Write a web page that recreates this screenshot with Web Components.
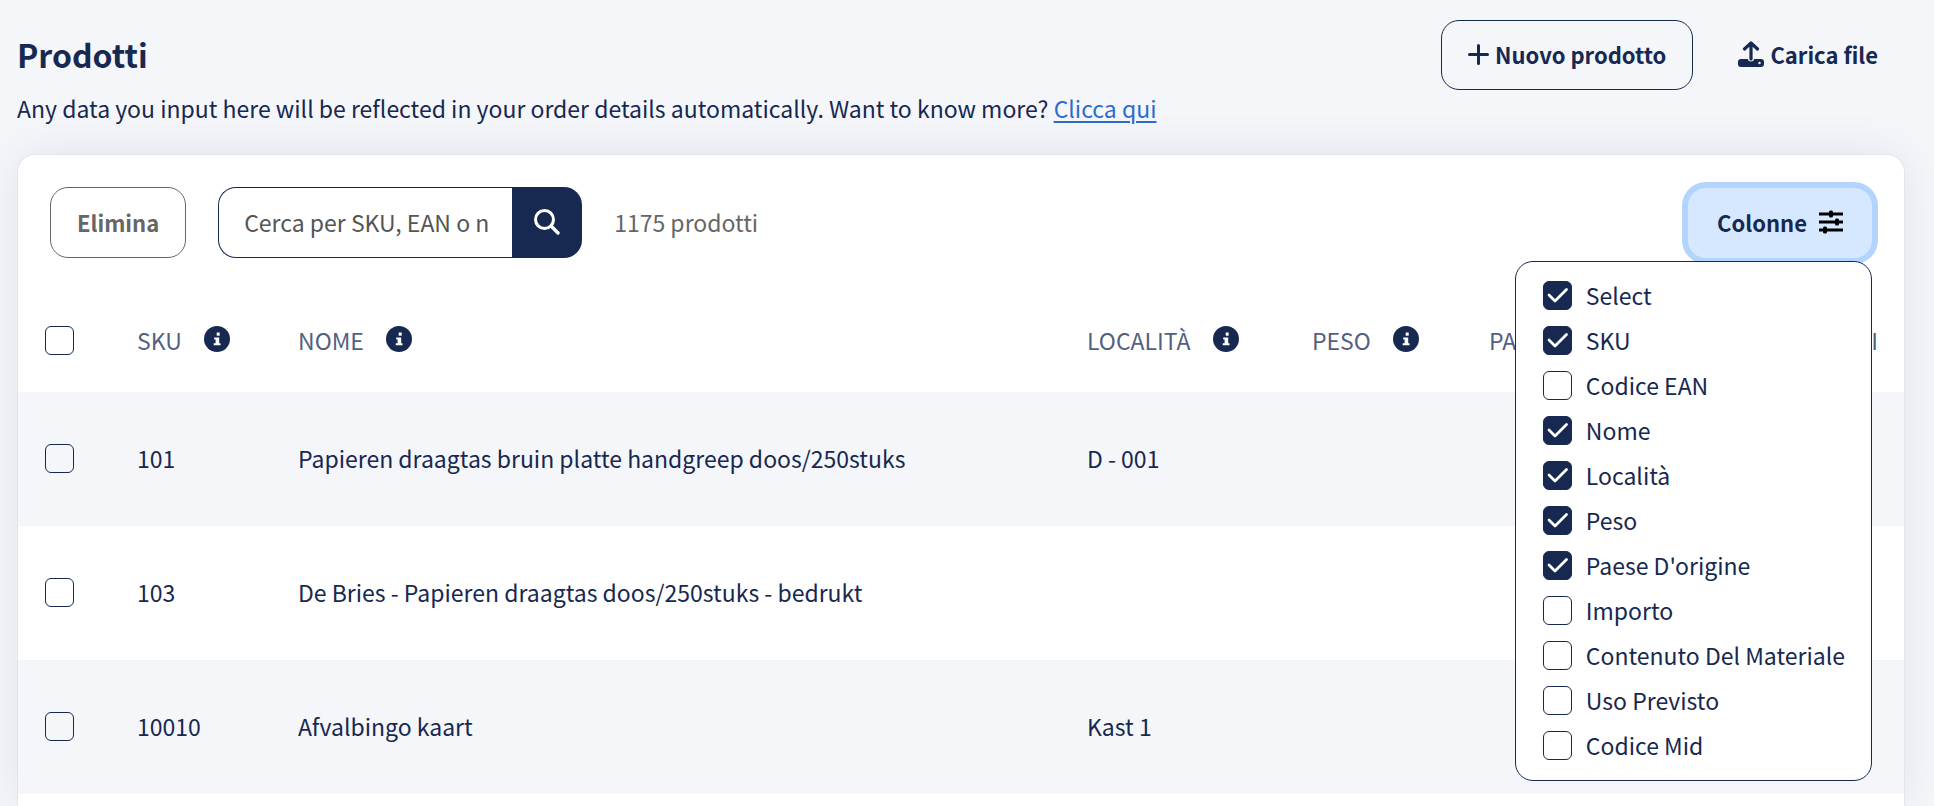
<!DOCTYPE html>
<html lang="it">
<head>
<meta charset="utf-8">
<meta name="viewport" content="width=device-width, initial-scale=1">
<title>Prodotti</title>
<style>
  :root {
    --navy: #172851;
    --page: #f4f6fa;
    --muted: #535f83;
    --grey: #666666;
    --link: #2b6cd0;
  }
  body {
    margin: 0;
    background: var(--page);
    color: var(--navy);
    font: 400 23px/34px "Noto Sans CJK SC", "Noto Sans", sans-serif;
  }
</style>
</head>
<body>
<products-page>
  <page-header slot="header" heading="Prodotti">
    Any data you input here will be reflected in your order details automatically. Want to know more? <a href="#help">Clicca qui</a>
    <action-button slot="actions" variant="outline"><ui-icon slot="before" name="plus"></ui-icon>Nuovo prodotto</action-button>
    <action-button slot="actions" variant="plain"><ui-icon slot="before" name="upload"></ui-icon>Carica file</action-button>
  </page-header>
  <product-toolbar slot="toolbar">
    <action-button variant="muted">Elimina</action-button>
    <search-box placeholder="Cerca per SKU, EAN o nome"></search-box>
    <span>1175 prodotti</span>
    <column-menu slot="end"></column-menu>
  </product-toolbar>
  <product-table></product-table>
</products-page>

<script>
  const CHECKBOX_CSS = `
    input[type=checkbox] {
      appearance: none; flex: none; display: block; box-sizing: border-box;
      width: 29px; height: 29px; margin: 0;
      border: 1px solid var(--navy); border-radius: 6px;
    }
    input[type=checkbox]:checked {
      background: var(--navy) url("data:image/svg+xml,%3Csvg xmlns='http://www.w3.org/2000/svg' viewBox='0 0 27 27'%3E%3Cpath d='M5 13l6 6L22.5 7.5' fill='none' stroke='white' stroke-width='2.8' stroke-linecap='round' stroke-linejoin='round'/%3E%3C/svg%3E") center / 27px no-repeat;
    }`;

  function define(name, render) {
    customElements.define(name, class extends HTMLElement {
      constructor() {
        super();
        this.attachShadow({ mode: 'open' });
      }
      connectedCallback() {
        this.shadowRoot.innerHTML = render(this);
      }
    });
  }

  const ICONS = {
    plus: [21, 21, '<path d="M10.5 1.5v18M1.5 10.5h18" fill="none" stroke="currentColor" stroke-width="3" stroke-linecap="round"/>'],
    upload: [26, 26, '<path d="M13 18V3M6.5 8L13 2l6.500 6" fill="none" stroke="currentColor" stroke-width="3.2" stroke-linecap="round" stroke-linejoin="round"/><path d="M3 18h6.700a3.400 3.400 0 0 0 6.600 0H23a3 3 0 0 1 3 3v2a3 3 0 0 1-3 3H3a3 3 0 0 1-3-3v-2a3 3 0 0 1 3-3zm18.500 2.800a1.200 1.200 0 1 0 0 2.400a1.200 1.200 0 1 0 0-2.400z" fill="currentColor" fill-rule="evenodd"/>'],
    search: [26, 26, '<g fill="none" stroke="currentColor" stroke-linecap="round"><circle cx="10.5" cy="10.5" r="9" stroke-width="3"/><path d="M17.5 17.5l6.500 6.500" stroke-width="3.4"/></g>'],
    sliders: [24, 24, '<path d="M0 4h24M0 12h24M0 20h24" stroke="#000" stroke-width="3"/><g fill="#000"><rect x="10" y="0.5" width="4" height="7" rx="1.5"/><rect x="16" y="8.5" width="4" height="7" rx="1.5"/><rect x="4" y="16.5" width="4" height="7" rx="1.5"/></g>'],
    info: [26, 26, '<circle cx="13" cy="13" r="13" fill="var(--navy)"/><path d="M12.7 6.5h3v3.200h-3z" fill="#fff"/><path d="M10.2 11.5h5v5.700h1.300v2H9.700v-2h1.900v-3.600h-1.400z" fill="#fff"/>']
  };

  define('ui-icon', el => {
    const [w, h, body] = ICONS[el.getAttribute('name')];
    return `<style>:host { display: inline-flex; flex: none; } svg { display: block; }</style>
      <svg width="${w}" height="${h}" viewBox="0 0 ${w} ${h}" aria-hidden="true">${body}</svg>`;
  });

  define('products-page', () => `
    <style>
      :host { display: flex; flex-direction: column; box-sizing: border-box; height: 100vh; overflow: hidden; padding: 20px 29px 0 17px; }
      main { flex: 1; margin-top: 28px; background: #fff; border: 1px solid #e4e5ea; border-bottom: 0; border-radius: 18px 18px 0 0; box-shadow: 0 0 48px rgba(30, 30, 60, .08); }
    </style>
    <slot name="header"></slot>
    <main><slot name="toolbar"></slot><slot></slot></main>`);

  define('page-header', el => `
    <style>
      :host { display: block; }
      .top { display: flex; align-items: center; justify-content: space-between; }
      h1 { margin: 0; padding-bottom: 2px; font-size: 32px; line-height: 48px; font-weight: 700; }
      .actions { display: flex; gap: 18px; }
      p { margin: 0; padding: 1px 0; }
      ::slotted(a) { color: var(--link); text-decoration-thickness: 2px; text-underline-offset: 3px; }
    </style>
    <div class="top">
      <h1>${el.getAttribute('heading')}</h1>
      <div class="actions"><slot name="actions"></slot></div>
    </div>
    <p><slot></slot></p>`);

  define('action-button', el => `
    <style>
      :host { display: block; }
      button {
        display: flex; align-items: center; gap: 6px; box-sizing: border-box; min-height: 70px; margin: 0; padding: 0 26px 2px;
        border: 1px solid transparent; border-radius: 18px; background: none; color: var(--navy);
        font: inherit; font-size: 22px; font-weight: 700; white-space: nowrap; cursor: pointer;
      }
      :host([variant=outline]) button { border-color: var(--navy); }
      :host([variant=muted]) button { min-height: 71px; border-color: var(--grey); color: var(--grey); }
    </style>
    <button type="button"><slot name="before"></slot><span><slot></slot></span></button>`);

  define('search-box', el => `
    <style>
      :host { display: block; }
      form { display: flex; margin: 0; height: 71px; }
      input {
        box-sizing: border-box; width: 294px; margin: 0; padding: 0 24px 2px 25px; font: inherit; color: var(--navy);
        border: 1px solid var(--navy); border-right: 0; border-radius: 18px 0 0 18px; background: #fff; outline: 0;
      }
      input::placeholder { color: #555; opacity: 1; }
      button {
        display: flex; align-items: center; justify-content: center; width: 70px; margin: 0; padding: 0 0 2px;
        border: 0; border-radius: 0 18px 18px 0; background: var(--navy); color: #fff; cursor: pointer;
      }
    </style>
    <form role="search">
      <input type="text" aria-label="Cerca" placeholder="${el.getAttribute('placeholder')}">
      <button type="button" aria-label="Cerca"><ui-icon name="search"></ui-icon></button>
    </form>`);

  define('product-toolbar', () => `
    <style>
      :host { display: flex; align-items: center; justify-content: space-between; padding: 32px 32px 0; }
      .start { display: flex; align-items: center; gap: 32px; color: var(--grey); }
      ::slotted(span) { padding-bottom: 2px; }
    </style>
    <div class="start"><slot></slot></div>
    <slot name="end"></slot>`);

  const COLUMNS = [
    ['Select', true], ['SKU', true], ['Codice EAN', false], ['Nome', true], ['Località', true], ['Peso', true],
    ["Paese D'origine", true], ['Importo', false], ['Contenuto Del Materiale', false], ['Uso Previsto', false], ['Codice Mid', false]
  ];

  define('column-menu', () => `
    <style>
      :host { display: block; position: relative; }
      button {
        display: flex; align-items: center; gap: 12px; min-height: 70px; margin: 0; padding: 0 29px 2px;
        border: 0; border-radius: 18px; background: #d6e8ff; box-shadow: 0 0 0 6px #b3d4fd;
        color: var(--navy); font: inherit; font-size: 22px; font-weight: 700; cursor: pointer;
      }
      ul {
        position: absolute; z-index: 2; top: calc(100% + 3px); right: 0; display: grid; gap: 16px;
        box-sizing: border-box; margin: 0; padding: 19px 26px 20px 27px; list-style: none;
        border: 1px solid var(--navy); border-radius: 18px; background: #fff;
      }
      label { display: flex; align-items: center; gap: 14px; height: 29px; white-space: nowrap; }
      ${CHECKBOX_CSS}
    </style>
    <button type="button" aria-expanded="true" aria-controls="columns">Colonne<ui-icon name="sliders"></ui-icon></button>
    <ul id="columns">
      ${COLUMNS.map(([name, on]) => `<li><label><input type="checkbox"${on ? ' checked' : ''}>${name}</label></li>`).join('')}
    </ul>`);

  const ROWS = [
    ['101', 'Papieren draagtas bruin platte handgreep doos/250stuks', 'D - 001'],
    ['103', 'De Bries - Papieren draagtas doos/250stuks - bedrukt', ''],
    ['10010', 'Afvalbingo kaart', 'Kast 1']
  ];
  const head = name => `<th scope="col"><span class="head">${name}<ui-icon name="info"></ui-icon></span></th>`;

  define('product-table', () => `
    <style>
      :host { display: block; margin-top: 32px; }
      table { width: 100%; table-layout: fixed; border-collapse: collapse; }
      th, td { box-sizing: border-box; padding: 0 26px 2px 27px; text-align: left; font-weight: 400; white-space: nowrap; }
      th { height: 102px; color: var(--muted); text-transform: uppercase; }
      th:last-child { text-align: right; }
      td { height: 134px; }
      tbody tr:nth-child(odd) { background: var(--page); }
      .head { display: flex; align-items: center; gap: 22px; }
      .head ui-icon { padding-bottom: 2px; }
      .check { width: 92px; } .sku { width: 161px; } .place { width: 225px; }
      .weight { width: 177px; } .origin { width: 290px; } .actions { width: 152px; }
      ${CHECKBOX_CSS}
    </style>
    <table>
      <colgroup><col class="check"><col class="sku"><col><col class="place"><col class="weight"><col class="origin"><col class="actions"></colgroup>
      <thead>
        <tr>
          <th scope="col"><input type="checkbox" aria-label="Seleziona tutti"></th>
          ${['SKU', 'Nome', 'Località', 'Peso', "Paese d'origine"].map(head).join('')}
          <th scope="col">Azioni</th>
        </tr>
      </thead>
      <tbody>
        ${ROWS.map(([sku, name, place]) => `<tr>
          <td><input type="checkbox" aria-label="Seleziona ${sku}"></td>
          <td>${sku}</td><td>${name}</td><td>${place}</td><td></td><td></td><td></td>
        </tr>`).join('')}
      </tbody>
    </table>`);
</script>
</body>
</html>
